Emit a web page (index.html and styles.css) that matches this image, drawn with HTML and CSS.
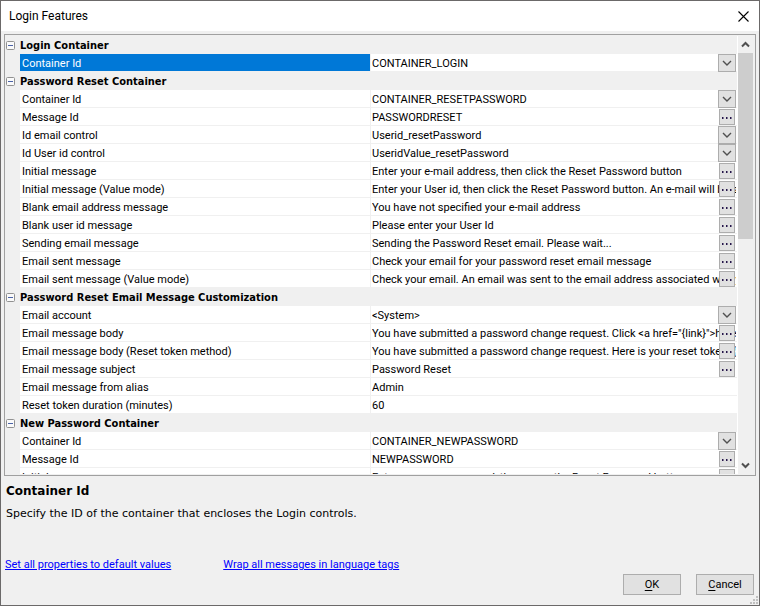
FILE: index.html
```html
<!DOCTYPE html>
<html lang="en">
<head>
<meta charset="utf-8">
<title>Login Features</title>
<link rel="stylesheet" href="styles.css">
</head>
<body>
<svg class="sprites" aria-hidden="true">
  <symbol id="chevron" viewBox="0 0 10 6"><path d="M1 1l4 4 4-4" fill="none" stroke="#505050" stroke-width="1.4"/></symbol>
  <symbol id="minus" viewBox="0 0 9 9"><rect x=".5" y=".5" width="8" height="8" rx="1" fill="#fafafa" stroke="#919191"/><path d="M2 4.500h5" stroke="#4b63a7"/></symbol>
  <symbol id="dots" viewBox="0 0 10 4"><path d="M0 2h1.500v2H0zM4 2h1.500v2H4zM8 2h1.500v2H8z" fill="#25154a"/></symbol>
</svg>
<main class="window">
  <header class="titlebar">
    <h1>Login Features</h1>
    <button class="close" aria-label="Close"><svg width="11" height="11" viewBox="0 0 11 11"><path d="M.5.5l10 10M10.500.5l-10 10" stroke="#000" stroke-width="1.100"/></svg></button>
  </header>

  <div class="grid">
    <div class="rows">
      <table class="props">
        <colgroup><col class="gutter"><col class="name"><col class="value"></colgroup>
        <tbody id="props"></tbody>
      </table>
    </div>
    <div class="scrollbar" aria-hidden="true">
      <div class="arrow"><svg width="9" height="7" viewBox="0 0 9 7"><path d="M1 5.500L4.500 2 8 5.500" fill="none" stroke="#505050" stroke-width="2"/></svg></div>
      <div class="track"><div class="thumb"></div></div>
      <div class="arrow"><svg width="9" height="7" viewBox="0 0 9 7"><path d="M1 1.500L4.500 5 8 1.500" fill="none" stroke="#505050" stroke-width="2"/></svg></div>
    </div>
  </div>

  <section class="help">
    <h2>Container Id</h2>
    <p>Specify the ID of the container that encloses the Login controls.</p>
  </section>

  <nav class="links">
    <a href="#defaults">Set all properties to default values</a>
    <a href="#wrap">Wrap all messages in language tags</a>
  </nav>

  <footer class="actions">
    <button class="push"><u>O</u>K</button>
    <button class="push"><u>C</u>ancel</button>
  </footer>
  <svg class="grip" width="8" height="8" viewBox="0 0 8 8" aria-hidden="true"><path d="M6 0h2v2H6zM3 3h2v2H3zM6 3h2v2H6zM0 6h2v2H0zM3 6h2v2H3zM6 6h2v2H6z" fill="#bfbfbf"/></svg>
</main>
<script src="app.js"></script>
</body>
</html>
```
FILE: styles.css
```css
* { box-sizing: border-box; }

body {
  margin: 0;
  background: #f0f0f0;
  color: #000;
  font: 11px/17px Roboto, Tahoma, sans-serif;
}

button, input, select { font: inherit; color: inherit; border-radius: 0; }

.sprites { position: absolute; width: 0; height: 0; }

.window {
  position: relative;
  display: flex;
  flex-direction: column;
  height: 100vh;
  border: 1px solid #6b6969;
}

.titlebar {
  display: flex;
  align-items: center;
  justify-content: space-between;
  height: 30px;
  padding: 0 10px 0 8px;
  background: #fff;
  flex: none;
}
.titlebar h1 { margin: 0; font: 12px/18px Roboto, "Noto Sans", sans-serif; }
.close { display: flex; padding: 0; border: 0; background: none; }

.grid {
  display: flex;
  flex: 1;
  min-height: 0;
  margin: 3px 3px 0;
  padding: 1px 1px 1px 0;
  border: 1px solid #a0a0a0;
}
.rows { flex: 1; min-width: 0; overflow: hidden; border-right: 1px solid #fff; }

.props { width: 100%; table-layout: fixed; border-collapse: separate; border-spacing: 0; }
.props .gutter { width: 15px; }
.props .name { width: 351px; }
.props tr { height: 18px; }
.props td, .props th { padding: 0; font-weight: normal; text-align: left; white-space: nowrap; }
.props .group { font: bold 11px/17px "DejaVu Sans Condensed", Tahoma, sans-serif; }
.props .fold { padding-left: 1px; line-height: 0; }
.toggle { display: block; padding: 0; border: 0; background: none; }
.toggle svg { display: block; }

.props .item th, .props .item .cell { background: #fff; border-bottom: 1px solid #f0f0f0; line-height: 15px; }
.props .item th { padding: 2px 0 0 2px; border-right: 1px solid #f0f0f0; }
.props .item .cell { position: relative; padding-right: 1px; }
.props .item.selected th { background: #0078d7; background-clip: padding-box; color: #fff; }

.editor { display: block; width: 100%; height: 17px; padding: 2px 0 0 1px; border: 0; background: none; overflow: hidden; outline: 0; }
select.editor { appearance: none; }

.drop, .more {
  position: absolute;
  display: flex;
  align-items: center;
  justify-content: center;
  padding: 0;
  border: 1px solid #adadad;
  background: #e1e1e1;
}
.drop { top: 0; right: 1px; width: 18px; height: 18px; pointer-events: none; }
.more { top: 1px; right: 2px; width: 16px; height: 16px; }

.scrollbar { display: flex; flex-direction: column; width: 15px; margin-right: 1px; }
.arrow { display: flex; flex: none; height: 17px; align-items: center; justify-content: center; }
.track { flex: 1; }
.thumb { height: 46%; background: #cdcdcd; }

.help { padding: 6px 5px 0; font: 11px/18px "DejaVu Sans", Verdana, sans-serif; }
.help h2 { margin: 0 0 5px; font-size: 12px; line-height: 18px; }
.help p { margin: 0; }

.links { display: flex; gap: 52px; padding: 33px 4px 0; }
.links a { color: #00f; }

.actions { display: flex; justify-content: flex-end; gap: 15px; padding: 1px 5px 10px; }
.push { width: 58px; height: 21px; padding: 0; border: 1px solid #adadad; background: #e1e1e1; }
.push u { text-underline-offset: 2px; }
.grip { position: absolute; right: 1px; bottom: 1px; }
```
FILE: app.js
```js
const groups = [
  ["Login Container", [
    ["Container Id", "CONTAINER_LOGIN", "drop"]
  ]],
  ["Password Reset Container", [
    ["Container Id", "CONTAINER_RESETPASSWORD", "drop"],
    ["Message Id", "PASSWORDRESET", "more"],
    ["Id email control", "Userid_resetPassword", "drop"],
    ["Id User id control", "UseridValue_resetPassword", "drop"],
    ["Initial message", "Enter your e-mail address, then click the Reset Password button", "more"],
    ["Initial message (Value mode)", "Enter your User id, then click the Reset Password button. An e-mail will be sent", "more"],
    ["Blank email address message", "You have not specified your e-mail address", "more"],
    ["Blank user id message", "Please enter your User Id", "more"],
    ["Sending email message", "Sending the Password Reset email. Please wait...", "more"],
    ["Email sent message", "Check your email for your password reset email message", "more"],
    ["Email sent message (Value mode)", "Check your email. An email was sent to the email address associated with your", "more"]
  ]],
  ["Password Reset Email Message Customization", [
    ["Email account", "<System>", "drop"],
    ["Email message body", "You have submitted a password change request. Click <a href=\"{link}\">here", "more"],
    ["Email message body (Reset token method)", "You have submitted a password change request. Here is your reset token: {token}", "more"],
    ["Email message subject", "Password Reset", "more"],
    ["Email message from alias", "Admin", ""],
    ["Reset token duration (minutes)", "60", ""]
  ]],
  ["New Password Container", [
    ["Container Id", "CONTAINER_NEWPASSWORD", "drop"],
    ["Message Id", "NEWPASSWORD", "more"],
    ["Initial message", "Enter your new password, then press the Reset Password button", "more"]
  ]]
];

const esc = s => s.replace(/&/g, "&amp;").replace(/</g, "&lt;").replace(/"/g, "&quot;");
const icon = (id, w, h) => `<svg width="${w}" height="${h}"><use href="#${id}"/></svg>`;

let n = 0;
function item([name, value, kind]) {
  const id = "prop" + n++;
  const editor = kind === "drop"
    ? `<select class="editor" id="${id}"><option>${esc(value)}</option></select><span class="drop">${icon("chevron", 10, 6)}</span>`
    : `<input class="editor" id="${id}" value="${esc(value)}">` +
      (kind ? `<button class="more" aria-label="Edit ${esc(name)}">${icon("dots", 10, 4)}</button>` : "");
  return `<tr class="item${n === 1 ? " selected" : ""}"><td></td><th scope="row"><label for="${id}">${esc(name)}</label></th><td class="cell">${editor}</td></tr>`;
}

document.getElementById("props").innerHTML = groups.map(([title, items]) =>
  `<tr><td class="fold"><button class="toggle" aria-label="Collapse ${title}">${icon("minus", 9, 9)}</button></td>` +
  `<th class="group" colspan="2" scope="colgroup">${title}</th></tr>` + items.map(item).join("")).join("");
```
